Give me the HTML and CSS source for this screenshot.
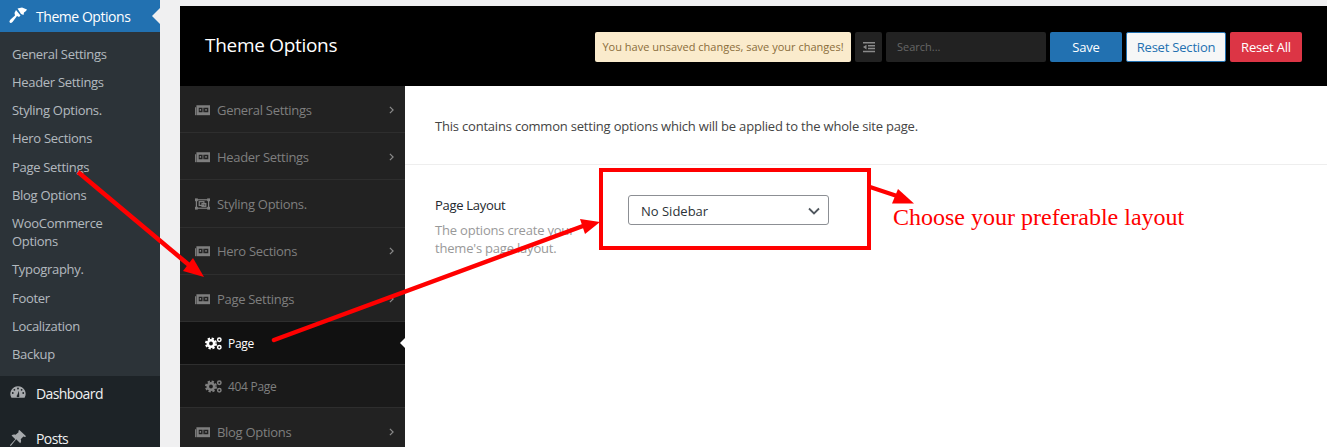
FILE: index.html
```html
<!DOCTYPE html>
<html lang="en">
<head>
<meta charset="utf-8">
<title>Theme Options</title>
<link rel="stylesheet" href="styles.css">
</head>
<body>
<div class="page">
  <aside class="wpmenu">
    <div class="wpcurrent">
      <svg class="wpicon" viewBox="9 7 18 18"><path fill="#fff" d="M17.500 8.500L22 7.500L27 9.500L26 11L24 12.500L23.500 15L21 14zM16 10L20.500 15.500L19 17L17 16L12.500 22Q10.500 24 9.500 22Q9 21 10.500 19.500L15 15.500L14.500 13z"/></svg>
      <span>Theme Options</span>
      <i class="wpnotch"></i>
    </div>
    <ul class="wpsub">
      <li>General Settings</li>
      <li>Header Settings</li>
      <li>Styling Options.</li>
      <li>Hero Sections</li>
      <li>Page Settings</li>
      <li>Blog Options</li>
      <li>WooCommerce Options</li>
      <li>Typography.</li>
      <li>Footer</li>
      <li>Localization</li>
      <li>Backup</li>
    </ul>
    <div class="wpitem wpdash">
      <svg class="wpicon dim" viewBox="0 0 20 20"><path fill="#a7aaad" fill-rule="evenodd" d="M10 2.500a8.500 8.500 0 0 0-7.300 12.800h14.600A8.500 8.500 0 0 0 10 2.500zM10 4a1 1 0 1 1 0 2 1 1 0 0 1 0-2zM6 5.500a1 1 0 1 1 0 2 1 1 0 0 1 0-2zm8 0a1 1 0 1 1 0 2 1 1 0 0 1 0-2zM4.200 9a1 1 0 1 1 0 2 1 1 0 0 1 0-2zm11.600 0a1 1 0 1 1 0 2 1 1 0 0 1 0-2zM11 7.500l.4 5.300a1.500 1.500 0 1 1-2.800 0l.4 0L11 7.500z"/></svg>
      <span>Dashboard</span>
    </div>
    <div class="wpitem wpposts">
      <svg class="wpicon dim" viewBox="0 0 20 20"><path fill="#a7aaad" d="M11.500 1l7.500 7-1.300 1-1.700-.8-3 3.200c.7 1.500.6 3.200-.5 4.400L8 11.500 2 19l-1-1 6-6.500-4.200-4.300c1.200-1 3-1.300 4.500-.7l3.300-3L10.500 2z"/></svg>
      <span>Posts</span>
    </div>
  </aside>

  <main class="panel">
    <header class="panelhead">
      <h1>Theme Options</h1>
      <div class="tools">
        <div class="notice">You have unsaved changes, save your changes!</div>
        <button class="iconbtn" type="button" aria-label="Toggle">
          <svg viewBox="0 0 12 12" width="12" height="12"><path fill="#8a8a8a" d="M0 1h12v1.500H0zM5 4h7v1.500H5zM5 6.800h7v1.500H5zM0 9.800h12v1.500H0zM3.500 3.800v4.700L0 6.100z"/></svg>
        </button>
        <div class="search">Search...</div>
        <button class="btn save" type="button">Save</button>
        <button class="btn reset" type="button">Reset Section</button>
        <button class="btn resetall" type="button">Reset All</button>
      </div>
    </header>
    <div class="panelbody">
      <nav class="nav">
        <div class="navitem"><svg class="navicon" viewBox="0 0 16 12"><use href="#card"/></svg><span>General Settings</span><svg class="chev" viewBox="0 0 6 10"><path d="M1 1l4 4-4 4" fill="none" stroke="#8a8a8a" stroke-width="1.500"/></svg></div>
        <div class="navitem"><svg class="navicon" viewBox="0 0 16 12"><use href="#card"/></svg><span>Header Settings</span><svg class="chev" viewBox="0 0 6 10"><path d="M1 1l4 4-4 4" fill="none" stroke="#8a8a8a" stroke-width="1.500"/></svg></div>
        <div class="navitem"><svg class="navicon" viewBox="0 0 16 12"><g fill="none" stroke="#7f7f7f" stroke-width="1.300"><rect x="1.500" y="1.500" width="13" height="9"/><rect x="4.500" y="3.500" width="5" height="4"/><rect x="7.500" y="5.500" width="4" height="3"/></g><g fill="#7f7f7f"><rect x="0" y="0" width="3" height="3"/><rect x="13" y="0" width="3" height="3"/><rect x="0" y="9" width="3" height="3"/><rect x="13" y="9" width="3" height="3"/></g></svg><span>Styling Options.</span></div>
        <div class="navitem"><svg class="navicon" viewBox="0 0 16 12"><use href="#card"/></svg><span>Hero Sections</span><svg class="chev" viewBox="0 0 6 10"><path d="M1 1l4 4-4 4" fill="none" stroke="#8a8a8a" stroke-width="1.500"/></svg></div>
        <div class="navitem"><svg class="navicon" viewBox="0 0 16 12"><use href="#card"/></svg><span>Page Settings</span><svg class="chev" viewBox="0 0 6 10"><path d="M1 1l4 4-4 4" fill="none" stroke="#8a8a8a" stroke-width="1.500"/></svg></div>
        <div class="subitem active"><svg class="gears" viewBox="0 0 17 13"><use href="#gears"/></svg><span>Page</span><i class="navnotch"></i></div>
        <div class="subitem"><svg class="gears" viewBox="0 0 17 13"><use href="#gears"/></svg><span>404 Page</span></div>
        <div class="navitem"><svg class="navicon" viewBox="0 0 16 12"><use href="#card"/></svg><span>Blog Options</span><svg class="chev" viewBox="0 0 6 10"><path d="M1 1l4 4-4 4" fill="none" stroke="#8a8a8a" stroke-width="1.500"/></svg></div>
      </nav>
      <section class="content">
        <p class="intro">This contains common setting options which will be applied to the whole site page.</p>
        <div class="field">
          <div class="fieldlabel">
            <h2>Page Layout</h2>
            <p>The options create your theme's page layout.</p>
          </div>
          <div class="select">
            <span>No Sidebar</span>
            <svg viewBox="0 0 12 8" width="12" height="8"><path d="M1 1.500l5 5 5-5" fill="none" stroke="#50575e" stroke-width="1.800"/></svg>
          </div>
        </div>
      </section>
    </div>
  </main>
</div>

<svg class="defs" aria-hidden="true">
  <symbol id="card" viewBox="0 0 16 12"><path fill="#7f7f7f" fill-rule="evenodd" d="M1.500 1H16v10.500H1.500zM8 3.500v5h1.200v-5zM4 3.500v5h3.500v-5zM9.700 3.500v5h4.500v-5z"/><path fill="#7f7f7f" d="M0 3h1v8.500H0zM5 4.800h1.500v2H5zM11 4.800h1.500v2H11z"/></symbol>
  <symbol id="gears" viewBox="0 0 17 13">
    <g fill="none" stroke="currentColor">
      <circle cx="6" cy="6.500" r="3.200" stroke-width="2.600"/>
      <circle cx="6" cy="6.500" r="5" stroke-width="2" stroke-dasharray="2.300 1.627"/>
      <circle cx="14.300" cy="2.800" r="1.700" stroke-width="1.500"/>
      <circle cx="14.300" cy="10.200" r="1.700" stroke-width="1.500"/>
    </g>
  </symbol>
</svg>

<div class="note">Choose your preferable layout</div>
<svg class="marks" viewBox="0 0 1327 447" aria-hidden="true">
  <rect x="601" y="170" width="268" height="78" fill="none" stroke="#f00" stroke-width="4"/>
  <path d="M78 172L189 265" stroke="#f00" stroke-width="4.500" fill="none"/>
  <path d="M204 277L183 271L193 258z" fill="#f00"/>
  <path d="M274 340L583 226" stroke="#f00" stroke-width="4.500" fill="none" stroke-linecap="round"/>
  <path d="M600 222L580 219L585 234z" fill="#f00"/>
  <path d="M870 187L900 197" stroke="#f00" stroke-width="4" fill="none"/>
  <path d="M914 203.500L892 203.500L898 189z" fill="#f00"/>
</svg>
</body>
</html>
```
FILE: styles.css
```css
* { box-sizing: border-box; }
html, body { margin: 0; height: 447px; overflow: hidden; }
body {
  position: relative;
  background: #f0f0f1;
  font-family: "Open Sans", "Noto Sans", sans-serif;
  font-size: 13px;
}
.page { display: flex; height: 447px; overflow: hidden; }

.wpmenu { width: 160px; flex: none; background: #1d2327; color: #f0f0f1; margin-right: 20px; }
.wpcurrent {
  position: relative;
  display: flex;
  align-items: center;
  gap: 9px;
  height: 32px;
  padding-left: 9px;
  background: #2271b1;
  color: #fff;
  font-size: 14px;
  letter-spacing: -.45px;
}
.wpicon { width: 18px; height: 18px; flex: none; }
.wpnotch {
  position: absolute;
  right: 0;
  top: 8px;
  border: 8px solid transparent;
  border-right-color: #f0f0f1;
  border-left-width: 0;
}
.wpsub {
  list-style: none;
  margin: 0;
  padding: 7.8px 0 8.2px;
  background: #2c3338;
  color: rgba(240, 246, 252, .7);
  letter-spacing: -.3px;
}
.wpsub li { padding: 5px 12px; line-height: 18.2px; }
.wpitem {
  display: flex;
  align-items: center;
  gap: 9px;
  padding-left: 9px;
  height: 34px;
  font-size: 14px;
  letter-spacing: -.6px;
  color: #f0f0f1;
}
.wpposts { margin-top: 11px; }

.panel { flex: 1; min-width: 0; margin-top: 6px; display: flex; flex-direction: column; }
.panelhead {
  flex: none;
  display: flex;
  align-items: center;
  justify-content: space-between;
  height: 80px;
  padding: 0 25px;
  background: #000;
}
.panelhead h1 { margin: 0 0 3px; font-size: 19px; font-weight: 400; letter-spacing: -.3px; color: #fff; }
.tools { display: flex; gap: 4px; height: 30px; margin-top: 1px; }
.notice {
  width: 256px;
  background: #faebcc;
  color: #8a6d3b;
  border-radius: 2px;
  font-size: 11px;
  line-height: 30px;
  text-align: center;
  white-space: nowrap;
}
.iconbtn {
  width: 27px;
  padding: 0;
  border: 0;
  border-radius: 2px;
  background: #222;
  display: flex;
  align-items: center;
  justify-content: center;
}
.search {
  width: 160px;
  padding-left: 11px;
  border-radius: 2px;
  background: #222;
  color: #666;
  font-size: 11px;
  line-height: 30px;
}
.btn {
  padding: 1px 0 0;
  border: 1px solid transparent;
  border-radius: 2px;
  font-family: inherit;
  font-size: 13px;
  letter-spacing: -.2px;
}
.save { width: 72px; background: #2271b1; color: #fff; }
.reset { width: 100px; background: #f6f7f7; color: #2271b1; border-color: #2271b1; }
.resetall { width: 72px; background: #dc3545; color: #fff; }

.panelbody { flex: 1; display: flex; min-height: 0; background: #fff; }
.nav { width: 225px; flex: none; background: #222; overflow: hidden; }
.navitem {
  display: flex;
  align-items: center;
  height: 47.24px;
  padding: 1px 11px 0 15px;
  border-bottom: 1px solid #2e2e2e;
  color: #7f7f7f;
  font-size: 13px;
  letter-spacing: -.3px;
}
.navicon { width: 15px; height: 12px; flex: none; margin-right: 7px; }
.navitem span { flex: 1; }
.chev { width: 5px; height: 8px; flex: none; }
.subitem {
  position: relative;
  display: flex;
  align-items: center;
  height: 43px;
  padding: 1px 0 0 25px;
  background: #1a1a1a;
  border-bottom: 1px solid #2e2e2e;
  color: #7f7f7f;
  font-size: 12px;
  letter-spacing: -.3px;
}
.subitem.active { background: #111; color: #fff; }
.gears { width: 17px; height: 13px; flex: none; margin-right: 6px; }
.navnotch {
  position: absolute;
  right: 0;
  top: 16px;
  border: 5px solid transparent;
  border-right-color: #fff;
  border-left-width: 0;
}

.content { flex: 1; min-width: 0; }
.intro {
  margin: 0;
  height: 79px;
  padding: 31px 30px 0;
  border-bottom: 1px solid #eee;
  color: #444;
  font-size: 13px;
  letter-spacing: -.2px;
  line-height: 18px;
}
.field { display: flex; padding-top: 30px; padding-left: 30px; }
.fieldlabel { width: 193px; flex: none; }
.fieldlabel h2 { margin: 0 0 6px; font-size: 13px; font-weight: 400; letter-spacing: -.3px; line-height: 20px; color: #23282d; }
.fieldlabel p { margin: 0; max-width: 170px; font-size: 13px; letter-spacing: -.2px; line-height: 18px; color: #999; }
.select {
  display: flex;
  align-items: center;
  justify-content: space-between;
  width: 201px;
  height: 30px;
  padding: 1px 8px 0 12px;
  border: 1px solid #8c8f94;
  border-radius: 3px;
  color: #2c3338;
  font-size: 13px;
}

.defs { position: absolute; width: 0; height: 0; }
.marks { position: absolute; left: 0; top: 0; width: 1327px; height: 447px; pointer-events: none; }
.note {
  position: absolute;
  left: 893px;
  top: 203px;
  font-family: "Liberation Serif", serif;
  font-size: 24px;
  line-height: 28px;
  color: #f00;
  white-space: nowrap;
  z-index: 1;
}
```
